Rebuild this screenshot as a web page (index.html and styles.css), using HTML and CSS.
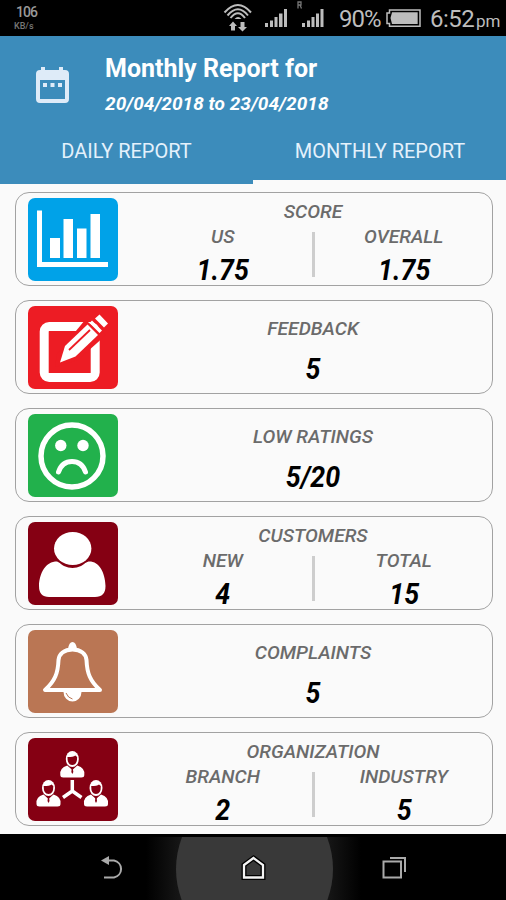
FILE: index.html
```html
<!DOCTYPE html>
<html lang="en">
<head>
<meta charset="utf-8">
<title>Monthly Report</title>
<link rel="stylesheet" href="styles.css">
</head>
<body>
<div class="status">
  <div class="speed"><span class="speed-num">106</span><span class="speed-unit">KB/s</span></div>
  <svg class="status-icons" width="120" height="36" viewBox="220 0 120 36">
    <g fill="none" stroke="#bdbdbd" stroke-width="2">
      <path d="M224.500 12.500Q238 -2.500 251 12.500"/>
      <path d="M227.500 15.500Q238 3 248 15.500"/>
      <path d="M230.500 18Q238 8.500 245 18"/>
    </g>
    <path fill="#bdbdbd" d="M234.500 19Q238 15 241.500 19ZM233 21.500L237 26H235V30.500H231V26H229ZM242.500 31.500L247 27H244.500V22H240.500V27H238Z"/>
    <path fill="#bdbdbd" d="M265 23h3v4h-3zM270 20.500h3V27h-3zM274.500 17h3v10h-3zM279 13.500h3.500V27H279zM284 9h3v18h-3zM302 23h3v4h-3zM307 20.500h3V27h-3zM311.500 17h3v10h-3zM316 13.500h3V27h-3zM320.500 9h3v18h-3z"/>
    <path fill="none" stroke="#777" stroke-width="1.300" d="M298 8.500V2h3v3h-3M300 5l1.500 3.500"/>
  </svg>
  <span class="pct">90%</span>
  <svg class="battery" width="36" height="20" viewBox="385 9 36 20">
    <path fill="none" stroke="#bdbdbd" stroke-width="1.500" d="M389.500 10H420V26.300H389.500V23.500H387V13H389.500Z"/>
    <path fill="#bdbdbd" d="M392 12.300H417.700V24H392L390.500 18Z"/>
  </svg>
  <span class="time">6:52</span><span class="pm">pm</span>
</div>
<header class="header">
  <div class="heading">
    <svg class="calendar" width="36" height="40" viewBox="0 0 36 40">
      <path fill="#deebf8" fill-rule="evenodd" d="M6 2H10V5H24V2H28V5H30Q34 5 34 9V34Q34 38 30 38H5Q1 38 1 34V9Q1 5 5 5H6ZM5 15V34H30V15Z"/>
      <path fill="#deebf8" d="M8 18h4v4H8zM15.500 18h4v4h-4zM23 18h4v4h-4z"/>
    </svg>
    <div>
      <h1 class="title">Monthly Report for</h1>
      <p class="dates">20/04/2018 to 23/04/2018</p>
    </div>
  </div>
  <nav class="tabs">
    <div class="tab tab-daily">DAILY REPORT</div>
    <div class="tab tab-monthly">MONTHLY REPORT</div>
  </nav>
</header>
<main class="cards">
  <section class="card">
    <svg class="tile blue" viewBox="0 0 90 83"><path fill="#fff" d="M9 12.500h5V64h66v5H9zM22 40h10v20H22zM35.500 21H45v39h-9.500zM49 30.500h9.500V60H49zM62.500 16H72v44h-9.500z"/></svg>
    <div class="body split">
      <h2 class="label">SCORE</h2>
      <div class="pair"><div class="cell"><span class="label">US</span><span class="value">1.75</span></div><i class="divider"></i><div class="cell"><span class="label">OVERALL</span><span class="value">1.75</span></div></div>
    </div>
  </section>
  <section class="card">
    <svg class="tile red" viewBox="0 0 90 83">
      <rect x="16.200" y="20.500" width="51" height="51" rx="5" fill="none" stroke="#fff" stroke-width="9"/>
      <path fill="#ed1c24" d="M57 14L78 29L50 54L27 61L29 48Z"/>
      <path fill="#fff" d="M32 56.500L37 40L59.500 18.500L70 29L47.500 50.500Z"/>
      <path fill="#fff" d="M61.500 17L64 14.500L74 24.500L71.500 27ZM67 12.500L71.500 8.500L80 17.500L76 21.500Z"/>
      <path stroke="#ed1c24" stroke-width="1.800" d="M41 44L62 24"/>
    </svg>
    <div class="body single"><h2 class="label">FEEDBACK</h2><span class="value">5</span></div>
  </section>
  <section class="card">
    <svg class="tile green" viewBox="0 0 90 83">
      <circle cx="44" cy="42" r="31" fill="none" stroke="#fff" stroke-width="5.500"/>
      <circle cx="32.800" cy="31.500" r="5.700" fill="#fff"/><circle cx="55" cy="31.500" r="5.700" fill="#fff"/>
      <path d="M30.500 58Q34 47.500 44 47.500T57.500 58" fill="none" stroke="#fff" stroke-width="5" stroke-linecap="round"/>
    </svg>
    <div class="body single"><h2 class="label">LOW RATINGS</h2><span class="value">5/20</span></div>
  </section>
  <section class="card">
    <svg class="tile maroon" viewBox="0 0 90 83">
      <path fill="#fff" d="M27 39.500C31 39 32 42 36 44Q44.500 48 53 44C57 42 58 39 63 39.500C73 41 77.500 54 77.500 64Q77.500 75 67 75H21Q11 75 11 64C11 54 16 41 27 39.500Z"/>
      <ellipse cx="44.700" cy="26.500" rx="19.600" ry="17.600" fill="#850013"/>
      <ellipse cx="44.700" cy="26.500" rx="18.700" ry="16.500" fill="#fff"/>
    </svg>
    <div class="body split">
      <h2 class="label">CUSTOMERS</h2>
      <div class="pair"><div class="cell"><span class="label">NEW</span><span class="value">4</span></div><i class="divider"></i><div class="cell"><span class="label">TOTAL</span><span class="value">15</span></div></div>
    </div>
  </section>
  <section class="card">
    <svg class="tile brown" viewBox="0 0 90 83">
      <path d="M44.500 19.500C36 19.500 31 24 30.500 30C30 43 27 51 17 60H72C62 51 59 43 58.500 30C58 24 53 19.500 44.500 19.500Z" fill="none" stroke="#fff" stroke-width="4" stroke-linejoin="round"/>
      <path fill="#fff" d="M40 19Q41 12 44.500 12T49 19ZM35.500 62H53.500A9 9.500 0 0 1 35.500 62Z"/>
      <path d="M38 63Q40 68 44.500 69" fill="none" stroke="#ba7654" stroke-width="1"/>
    </svg>
    <div class="body single"><h2 class="label">COMPLAINTS</h2><span class="value">5</span></div>
  </section>
  <section class="card">
    <svg class="tile maroon" viewBox="0 0 90 83">
      <defs><g id="person">
        <path fill="#fff" d="M-12 24Q-13 17 -5 14.500L0 19L5 14.500Q13 17 12 24Q12 26.500 9 26.500H-9Q-12 26.500 -12 24Z"/>
        <ellipse cx="0" cy="8" rx="6.500" ry="8" fill="#fff"/>
        <path fill="#850013" d="M-4.800 6Q1 6 3 4.500L4.800 6Q5 14 0 14T-4.800 6Z"/>
        <path fill="#850013" d="M-.6 18h1.200l.4 3L0 23L-1 21Z"/>
      </g></defs>
      <use href="#person" x="44.300" y="13"/><use href="#person" x="20.500" y="42"/><use href="#person" x="68" y="42"/>
      <path d="M44.300 42V53L35 59.500M44.300 53L53.500 59.500" fill="none" stroke="#fff" stroke-width="3.500"/>
    </svg>
    <div class="body split">
      <h2 class="label">ORGANIZATION</h2>
      <div class="pair"><div class="cell"><span class="label">BRANCH</span><span class="value">2</span></div><i class="divider"></i><div class="cell"><span class="label">INDUSTRY</span><span class="value">5</span></div></div>
    </div>
  </section>
</main>
<footer class="navbar">
  <svg width="506" height="67" viewBox="0 833 506 67">
    <defs><linearGradient id="glow"><stop offset="0" stop-color="#000"/><stop offset=".2" stop-color="#1c1c1c"/><stop offset=".8" stop-color="#1c1c1c"/><stop offset="1" stop-color="#000"/></linearGradient></defs>
    <path fill="url(#glow)" d="M146 836H361V900H146Z"/>
    <path fill="#393939" d="M182 836H327Q339 868 327 900H182Q170 868 182 836Z"/>
    <path d="M104 876.500H114A9 8.700 0 0 0 114 859.500H106" fill="none" stroke="#aaa" stroke-width="2"/>
    <path fill="#aaa" d="M101 859.500L109 855V864Z"/>
    <path d="M244 864L253.500 857L263 864V876.500H244Z" fill="#393939" stroke="#000" stroke-width="5"/>
    <path d="M244 864L253.500 857L263 864V876.500H244Z" fill="none" stroke="#f4f4f4" stroke-width="2.300"/>
    <path d="M383.500 860.500H401V876.500H383.500ZM390 857H405V871" fill="none" stroke="#aaa" stroke-width="2"/>
  </svg>
</footer>
</body>
</html>
```

FILE: styles.css
```css
* { box-sizing: border-box; }
body {
  margin: 0;
  width: 506px;
  height: 900px;
  overflow: hidden;
  display: flex;
  flex-direction: column;
  background: #fafafa;
  font-family: Roboto, "Liberation Sans", sans-serif;
}
h1, h2, p { margin: 0; }
svg { display: block; flex: none; }

.status {
  height: 36px;
  flex: none;
  display: flex;
  background: #000;
  color: #bdbdbd;
  white-space: nowrap;
}
.speed { width: 220px; padding: 4px 0 0 14px; display: flex; flex-direction: column; color: #999; }
.speed-num { font-size: 14px; line-height: 17px; padding-left: 2px; letter-spacing: -1px; font-weight: 500; }
.speed-unit { font-size: 9px; line-height: 11px; color: #777; font-weight: 500; }
.pct { width: 45px; font-size: 24px; line-height: 38px; letter-spacing: -1px; margin-left: -1px; }
.battery { margin: 9px 9px 0 1px; }
.time { width: 46px; font-size: 24px; line-height: 38px; letter-spacing: -.5px; }
.pm { font-size: 17px; line-height: 42px; }

.header {
  height: 148px;
  flex: none;
  background: #3c8cbb;
  color: #fff;
}
.heading { height: 88px; display: flex; padding-top: 15px; }
.calendar { margin: 14px 34px 0 35px; }
.title { font-size: 25px; line-height: 35px; font-weight: 700; }
.dates { font-size: 19px; line-height: 35px; font-weight: 700; font-style: italic; letter-spacing: .05px; }
.tabs { display: flex; height: 60px; }
.tab {
  width: 253px;
  font-size: 20px;
  line-height: 54px;
  text-align: center;
  color: #e4f1fc;
}
.tab-monthly { background: linear-gradient(#fafafa, #fafafa) bottom / 100% 4px no-repeat; padding-left: 1px; }

.cards {
  height: 649.500px;
  flex: none;
  display: flex;
  flex-direction: column;
  gap: 14.100px;
  padding: 8px 13.500px 0 14.500px;
}
.card {
  height: 94px;
  flex: none;
  display: flex;
  border: 1.500px solid #a2a2a2;
  border-radius: 14px;
  padding-left: 12.500px;
}
.tile { width: 90px; height: 83px; margin-top: 4.500px; border-radius: 7px; }
.blue { background: #00a2e8; }
.red { background: #ed1c24; }
.green { background: #22b14c; }
.maroon { background: #850013; }
.brown { background: #ba7654; }

.body { width: 360px; flex: none; margin: -1px 0 0 15px; text-align: center; }
.label { display: block; font-size: 19.200px; line-height: 25px; font-weight: 500; font-style: italic; color: #6b6b6b; }
.value { display: block; font-size: 28.500px; line-height: 30px; font-weight: 700; font-style: italic; color: #000; transform: scaleX(.94); }
.split { padding-top: 7px; }
.split .value { margin-top: 6.500px; }
.pair { display: flex; }
.cell { width: 178.500px; }
.cell:first-child { padding-left: 1px; }
.divider { width: 3px; height: 45px; margin-top: 8px; background: #cdcdcd; }
.single { padding-top: 15.500px; }
.single .value { margin-top: 14px; }

.navbar { height: 66.500px; flex: none; background: #000; }
```
